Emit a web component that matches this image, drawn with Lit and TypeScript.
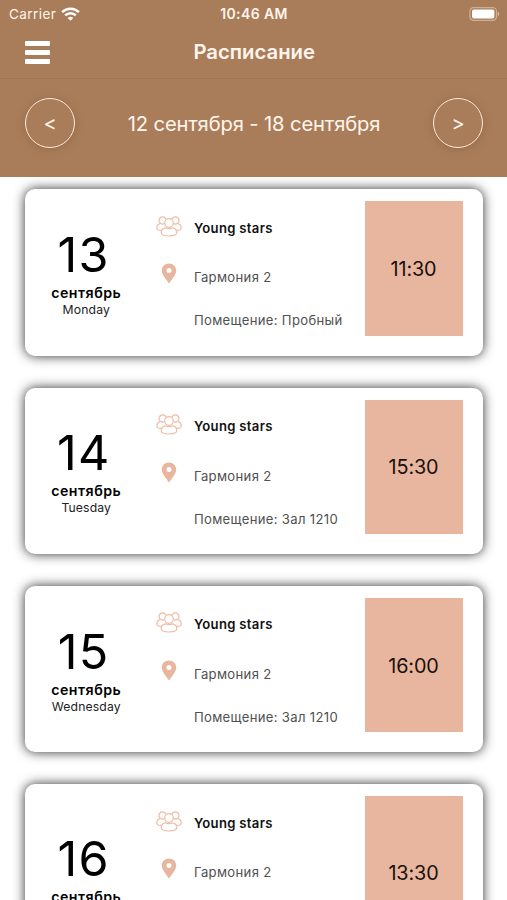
import { LitElement, html, css, svg } from "lit";
import { customElement, property } from "lit/decorators.js";

interface Lesson {
  day: string;
  weekday?: string;
  room?: string;
  time: string;
}

const LESSONS: Lesson[] = [
  { day: "13", weekday: "Monday", room: "Пробный", time: "11:30" },
  { day: "14", weekday: "Tuesday", room: "Зал 1210", time: "15:30" },
  { day: "15", weekday: "Wednesday", room: "Зал 1210", time: "16:00" },
  { day: "16", time: "13:30" },
];

const peopleIcon = html`<svg width="26" height="21" viewBox="0 0 26 21" fill="none" stroke="#edbea5" stroke-width="1.2">
  ${svg`
    <path d="M8.400 7.600A3.600 3.600 0 1 1 10 3.200M17.600 7.600A3.600 3.600 0 1 0 16 3.200"/>
    <path d="M4 7.600C2 8.200 .8 10.200 .8 12.300C.8 13.900 2.600 14.500 5.600 14.300M22 7.600C24 8.200 25.200 10.200 25.200 12.300C25.200 13.900 23.400 14.500 20.400 14.300"/>
    <circle cx="13" cy="7" r="4.300"/>
    <path d="M9.300 11.800C6.800 12.300 5.200 14.200 5.200 16.500C5.200 18.900 7.500 20 13 20S20.800 18.900 20.800 16.500C20.800 14.200 19.200 12.300 16.700 11.800C14.400 12.800 11.600 12.800 9.300 11.800Z"/>
  `}
</svg>`;

const pinIcon = html`<svg width="16" height="21" viewBox="0 0 16 21">
  <path fill="#e8b69e" fill-rule="evenodd" d="M8 .5C3.900 .5 .8 3.500 .8 7.500C.8 12 5.200 16.300 8 20.500C10.800 16.300 15.200 12 15.200 7.500C15.200 3.500 12.100 .5 8 .5ZM8 5A2.500 2.500 0 1 1 8 10A2.500 2.500 0 1 1 8 5Z"/>
</svg>`;

@customElement("status-bar")
class StatusBar extends LitElement {
  static styles = css`
    :host {
      display: grid;
      grid-template-columns: 1fr auto 1fr;
      align-items: center;
      height: 27px;
      padding: 0 7px 0 9px;
      color: #fff5ec;
      font-size: 13.5px;
      line-height: 28px;
    }
    .carrier { display: flex; align-items: center; gap: 5px; letter-spacing: 0.42px; }
    .clock { font-weight: 600; font-size: 14px; letter-spacing: 0.4px; margin-right: 1px; }
    .battery { justify-self: end; }
    svg { display: block; }
  `;

  render() {
    return html`
      <div class="carrier">
        <span>Carrier</span>
        <svg width="19" height="14" viewBox="0 0 19 14" fill="none" stroke="#fff" stroke-width="2.500">
          <path d="M1.100 5.100A12 12 0 0 1 17.900 5.100"/>
          <path d="M4.200 8.400A7.500 7.500 0 0 1 14.800 8.400"/>
          <path d="M9.500 13.800L6.700 11A4 4 0 0 1 12.300 11Z" fill="#fff" stroke="none"/>
        </svg>
      </div>
      <div class="clock">10:46 AM</div>
      <svg class="battery" width="31" height="14" viewBox="0 0 31 14">
        <rect x=".8" y=".6" width="26.800" height="12.800" rx="4" fill="none" stroke="#d0ae93" stroke-width="1.200"/>
        <rect x="3" y="2.600" width="22.400" height="8.800" rx="2" fill="#fff"/>
        <path d="M28.900 4.800C30.500 5.400 30.500 8.600 28.900 9.200Z" fill="#d9bda6"/>
      </svg>
    `;
  }
}

@customElement("lesson-card")
class LessonCard extends LitElement {
  @property({ attribute: false }) lesson!: Lesson;

  static styles = css`
    :host {
      display: grid;
      grid-template-columns: 122.500px 1fr 98px;
      box-sizing: border-box;
      height: 166.6px;
      padding: 12.2px 20px 20px 0;
      border-radius: 10px;
      background: #fff;
      box-shadow: 0 0 12px rgba(0, 0, 0, 0.82);
      color: #000;
    }
    :host(.tall) { height: 184px; }
    .date { display: flex; flex-direction: column; align-items: center; justify-content: center; padding-top: 6px; }
    .day { font-size: 48.500px; line-height: 58px; margin-left: -5px; letter-spacing: 1.300px; font-weight: 370; }
    .month { font-size: 14.2px; line-height: 18px; font-weight: 600; letter-spacing: 0.5px; }
    .weekday { font-size: 12.2px; line-height: 15px; height: 15px; letter-spacing: 0.15px; color: #222; }
    .details {
      display: grid;
      grid-template-columns: 42px 1fr;
      grid-template-rows: 49.600px 43px 43px;
      padding: 13.400px 0 0 4.500px;
      height: 0;
      align-content: start;
      white-space: nowrap;
    }
    .icon { display: flex; justify-content: center; width: 33px; }
    .people { padding-top: 1px; }
    .pin { margin-top: -1px; }
    .text { font-size: 13.1px; line-height: 26px; letter-spacing: 0.32px; color: #505050; }
    .group { font-weight: 600; color: #111; letter-spacing: 0.3px; }
    .time {
      display: flex;
      align-items: center;
      justify-content: center;
      padding-top: 1px;
      background: #e8b69e;
      font-size: 19.800px;
      letter-spacing: -0.1px;
      color: #18100c;
    }
    svg { display: block; }
  `;

  render() {
    const { day, weekday, room, time } = this.lesson;
    return html`
      <div class="date">
        <div class="day">${day}</div>
        <div class="month">сентябрь</div>
        <div class="weekday">${weekday}</div>
      </div>
      <div class="details">
        <div class="icon people">${peopleIcon}</div>
        <div class="text group">Young stars</div>
        <div class="icon pin">${pinIcon}</div>
        <div class="text">Гармония 2</div>
        <div></div>
        ${room ? html`<div class="text">Помещение: ${room}</div>` : null}
      </div>
      <div class="time">${time}</div>
    `;
  }
}

@customElement("app-root")
class AppRoot extends LitElement {
  static styles = css`
    :host {
      display: block;
      height: 900px;
      overflow: hidden;
      background: #fff;
      font-family: Inter, "Liberation Sans", sans-serif;
    }
    header { height: 177px; background: #aa7d5a; color: #fff5ec; box-sizing: border-box; }
    .title-bar {
      display: grid;
      grid-template-columns: 25px 1fr 25px;
      align-items: center;
      height: 52px;
      padding: 0 24.500px 0 25px;
      box-sizing: border-box;
      border-bottom: 1px solid #a17552;
    }
    .menu { display: flex; flex-direction: column; gap: 4.500px; }
    .menu i { height: 4.500px; border-radius: 1px; background: #fff; }
    h1 { margin: 0 0 1px 1px; text-align: center; font-size: 20.3px; line-height: 24px; font-weight: 600; }
    .week { display: flex; align-items: center; justify-content: space-between; height: 88px; padding: 0 24px 0 25px; }
    .step {
      box-sizing: border-box;
      width: 50px;
      height: 50px;
      padding: 0;
      border: 1.500px solid #ffe9d9;
      border-radius: 50%;
      background: #aa7d5a;
      box-shadow: 0 1px 10px rgba(90, 55, 25, 0.25);
      color: #fff5ec;
      font: 20px/46px Inter, sans-serif;
      text-align: center;
    }
    .range { margin-top: 2px; font-size: 20.2px; line-height: 26px; letter-spacing: -0.13px; white-space: nowrap; }
    main { display: flex; flex-direction: column; gap: 31.700px; padding: 12.300px 24.500px 0 25px; }
    lesson-card { flex: none; }
  `;

  render() {
    return html`
      <header>
        <status-bar></status-bar>
        <div class="title-bar">
          <div class="menu"><i></i><i></i><i></i></div>
          <h1>Расписание</h1>
        </div>
        <div class="week">
          <button class="step">&lt;</button>
          <div class="range">12 сентября - 18 сентября</div>
          <button class="step">&gt;</button>
        </div>
      </header>
      <main>
        ${LESSONS.map((lesson, i) => html`
          <lesson-card class=${i === LESSONS.length - 1 ? "tall" : ""} .lesson=${lesson}></lesson-card>
        `)}
      </main>
    `;
  }
}
